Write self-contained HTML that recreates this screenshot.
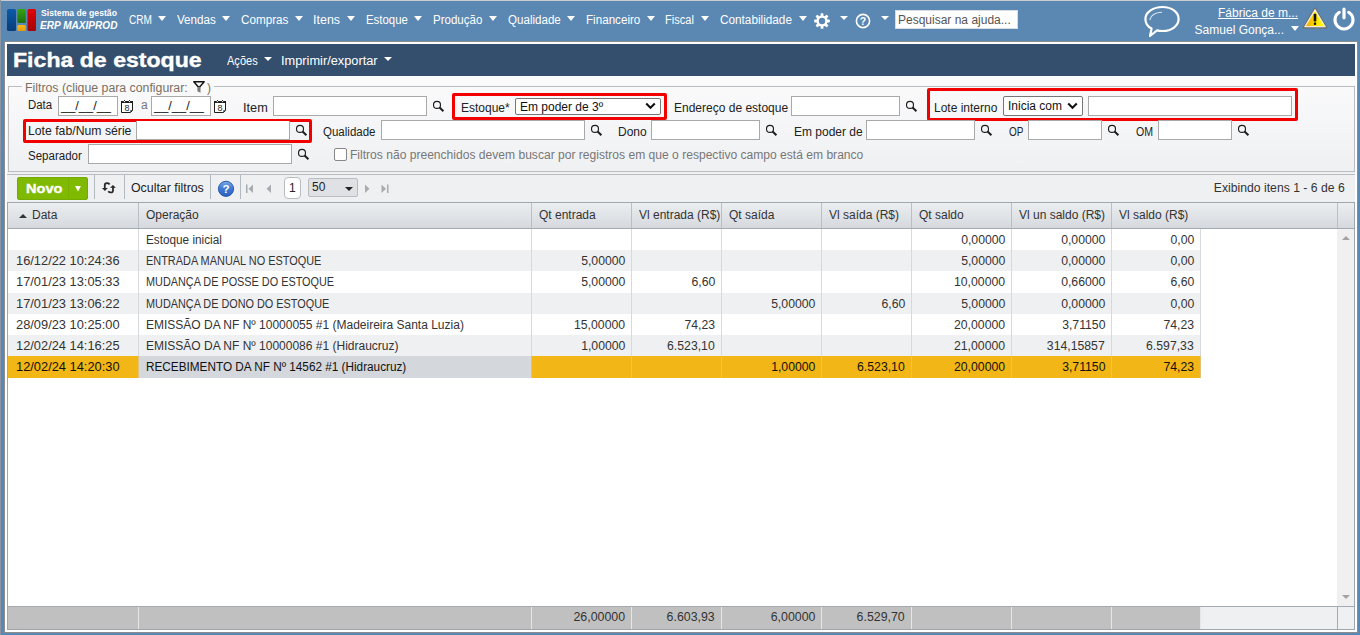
<!DOCTYPE html>
<html><head><meta charset="utf-8"><title>Ficha de estoque</title>
<style>
html,body{margin:0;padding:0;width:1360px;height:635px;overflow:hidden;font-family:"Liberation Sans", sans-serif;}
body{position:relative;}
</style></head><body>
<div style="position:absolute;left:0px;top:0px;width:1360px;height:635px;background:#5b87b3;"></div>
<div style="position:absolute;left:0px;top:0px;width:1360px;height:1px;background:#c9cdd2;"></div>
<div style="position:absolute;left:0px;top:0px;width:1px;height:635px;background:#8a96a3;"></div>
<svg style="position:absolute;left:6px;top:8px" width="32" height="25">
<defs>
<linearGradient id="lb" x1="0" y1="0" x2="0" y2="1"><stop offset="0" stop-color="#0d5aa8"/><stop offset="1" stop-color="#073d7a"/></linearGradient>
<linearGradient id="lg" x1="0" y1="0" x2="0" y2="1"><stop offset="0" stop-color="#36a214"/><stop offset="1" stop-color="#1c700c"/></linearGradient>
<linearGradient id="ly" x1="0" y1="0" x2="0" y2="1"><stop offset="0" stop-color="#f6b81a"/><stop offset="1" stop-color="#e69a0a"/></linearGradient>
<linearGradient id="lr" x1="0" y1="0" x2="0" y2="1"><stop offset="0" stop-color="#e00404"/><stop offset="1" stop-color="#a30404"/></linearGradient>
</defs>
<rect x="1" y="1" width="9" height="22" rx="1.5" fill="url(#lb)"/>
<rect x="11.3" y="1" width="8.5" height="14" rx="1.5" fill="url(#lg)"/>
<rect x="11.3" y="17" width="8.5" height="6" rx="1.5" fill="url(#ly)"/>
<rect x="21.5" y="1" width="8.5" height="22" rx="1.5" fill="url(#lr)"/>
</svg>
<div style="position:absolute;left:41px;top:8.00px;font-size:9.5px;line-height:9.5px;color:#fff;font-weight:bold;white-space:nowrap;transform:scaleX(0.91);transform-origin:left top;">Sistema de gestão</div>
<div style="position:absolute;left:40px;top:20.00px;font-size:10.5px;line-height:10.5px;color:#fff;font-weight:bold;white-space:nowrap;transform:scaleX(0.96);transform-origin:left top;font-style:italic;">ERP MAXIPROD</div>
<div style="position:absolute;left:129px;top:14.00px;font-size:12px;line-height:12px;color:#fff;font-weight:normal;white-space:nowrap;transform:scaleX(0.84);transform-origin:left top;">CRM</div>
<svg style="position:absolute;left:158px;top:16px" width="8" height="5"><polygon points="0,0 8,0 4.0,5" fill="#fff"/></svg>
<div style="position:absolute;left:177px;top:14.00px;font-size:12px;line-height:12px;color:#fff;font-weight:normal;white-space:nowrap;transform:scaleX(0.97);transform-origin:left top;">Vendas</div>
<svg style="position:absolute;left:222px;top:16px" width="8" height="5"><polygon points="0,0 8,0 4.0,5" fill="#fff"/></svg>
<div style="position:absolute;left:241px;top:14.00px;font-size:12px;line-height:12px;color:#fff;font-weight:normal;white-space:nowrap;transform:scaleX(0.975);transform-origin:left top;">Compras</div>
<svg style="position:absolute;left:295px;top:16px" width="8" height="5"><polygon points="0,0 8,0 4.0,5" fill="#fff"/></svg>
<div style="position:absolute;left:313px;top:14.00px;font-size:12px;line-height:12px;color:#fff;font-weight:normal;white-space:nowrap;transform:scaleX(1.04);transform-origin:left top;">Itens</div>
<svg style="position:absolute;left:347px;top:16px" width="8" height="5"><polygon points="0,0 8,0 4.0,5" fill="#fff"/></svg>
<div style="position:absolute;left:366px;top:14.00px;font-size:12px;line-height:12px;color:#fff;font-weight:normal;white-space:nowrap;transform:scaleX(0.95);transform-origin:left top;">Estoque</div>
<svg style="position:absolute;left:414px;top:16px" width="8" height="5"><polygon points="0,0 8,0 4.0,5" fill="#fff"/></svg>
<div style="position:absolute;left:433px;top:14.00px;font-size:12px;line-height:12px;color:#fff;font-weight:normal;white-space:nowrap;transform:scaleX(0.96);transform-origin:left top;">Produção</div>
<svg style="position:absolute;left:489px;top:16px" width="8" height="5"><polygon points="0,0 8,0 4.0,5" fill="#fff"/></svg>
<div style="position:absolute;left:508px;top:14.00px;font-size:12px;line-height:12px;color:#fff;font-weight:normal;white-space:nowrap;transform:scaleX(0.965);transform-origin:left top;">Qualidade</div>
<svg style="position:absolute;left:567px;top:16px" width="8" height="5"><polygon points="0,0 8,0 4.0,5" fill="#fff"/></svg>
<div style="position:absolute;left:586px;top:14.00px;font-size:12px;line-height:12px;color:#fff;font-weight:normal;white-space:nowrap;transform:scaleX(0.97);transform-origin:left top;">Financeiro</div>
<svg style="position:absolute;left:647px;top:16px" width="8" height="5"><polygon points="0,0 8,0 4.0,5" fill="#fff"/></svg>
<div style="position:absolute;left:665px;top:14.00px;font-size:12px;line-height:12px;color:#fff;font-weight:normal;white-space:nowrap;transform:scaleX(0.92);transform-origin:left top;">Fiscal</div>
<svg style="position:absolute;left:701px;top:16px" width="8" height="5"><polygon points="0,0 8,0 4.0,5" fill="#fff"/></svg>
<div style="position:absolute;left:720px;top:14.00px;font-size:12px;line-height:12px;color:#fff;font-weight:normal;white-space:nowrap;transform:scaleX(0.98);transform-origin:left top;">Contabilidade</div>
<svg style="position:absolute;left:799px;top:16px" width="8" height="5"><polygon points="0,0 8,0 4.0,5" fill="#fff"/></svg>
<svg style="position:absolute;left:813px;top:12px" width="18" height="18" viewBox="0 0 18 18">
<g fill="#fff" transform="translate(9,9)">
<rect x="-1.4" y="-7.8" width="2.8" height="15.6" rx="0.6"/>
<rect x="-1.4" y="-7.8" width="2.8" height="15.6" rx="0.6" transform="rotate(45)"/>
<rect x="-1.4" y="-7.8" width="2.8" height="15.6" rx="0.6" transform="rotate(90)"/>
<rect x="-1.4" y="-7.8" width="2.8" height="15.6" rx="0.6" transform="rotate(135)"/>
<circle r="5.6"/>
</g>
<circle cx="9" cy="9" r="3.2" fill="#5b87b3"/>
</svg>
<svg style="position:absolute;left:840px;top:16px" width="8" height="4"><polygon points="0,0 8,0 4.0,4" fill="#fff"/></svg>
<svg style="position:absolute;left:855px;top:13px" width="16" height="16" viewBox="0 0 16 16">
<circle cx="8" cy="8" r="6.6" fill="none" stroke="#fff" stroke-width="1.6"/>
<text x="8" y="12.2" font-family="Liberation Sans" font-weight="bold" font-size="10.5" fill="#fff" text-anchor="middle">?</text>
</svg>
<svg style="position:absolute;left:881px;top:16px" width="8" height="4"><polygon points="0,0 8,0 4.0,4" fill="#fff"/></svg>
<div style="position:absolute;left:895px;top:10px;width:123px;height:19px;background:#fff;border:1px solid #d8dde3;box-sizing:border-box;"></div>
<div style="position:absolute;left:898px;top:14.00px;font-size:12px;line-height:12px;color:#555;font-weight:normal;white-space:nowrap;">Pesquisar na ajuda...</div>
<svg style="position:absolute;left:1142px;top:4px" width="40" height="35" viewBox="0 0 40 35">
<path d="M20.5 3 C29.6 3 36.6 8.2 36.6 15 C36.6 21.8 29.6 27 20.5 27 C18.5 27 16.7 26.8 15 26.4 L8 32 L9.6 24.6 C5.5 22.5 3.4 19 3.4 15 C3.4 8.2 11.4 3 20.5 3 Z" fill="none" stroke="#fff" stroke-width="2.2" stroke-linejoin="round"/>
<path d="M8 15.5 C9 11.5 13.5 8.6 19.5 8.3" fill="none" stroke="#fff" stroke-width="1.1" stroke-linecap="round" opacity="0.85"/>
</svg>
<div style="position:absolute;right:62px;top:7.00px;font-size:12px;line-height:12px;color:#fff;font-weight:normal;white-space:nowrap;text-decoration:underline;">Fábrica de m...</div>
<div style="position:absolute;right:76px;top:24.00px;font-size:12px;line-height:12px;color:#fff;font-weight:normal;white-space:nowrap;">Samuel Gonça...</div>
<svg style="position:absolute;left:1291px;top:26px" width="8" height="5"><polygon points="0,0 8,0 4.0,5" fill="#fff"/></svg>
<svg style="position:absolute;left:1302px;top:7px" width="26" height="23" viewBox="0 0 26 23">
<defs><linearGradient id="wy" x1="0" y1="0" x2="1" y2="0"><stop offset="0" stop-color="#f2a800"/><stop offset="0.6" stop-color="#ffe600"/><stop offset="1" stop-color="#ffff10"/></linearGradient></defs>
<path d="M13 1.2 L24.6 20.6 L1.4 20.6 Z" fill="#6e6e6e" stroke="#6e6e6e" stroke-width="1.6" stroke-linejoin="round"/>
<path d="M13 2.4 L23.4 19.8 L2.6 19.8 Z" fill="#fffbe0" stroke="#fffbe0" stroke-width="0.8" stroke-linejoin="round"/>
<path d="M13 4.2 L22 18.9 L4 18.9 Z" fill="url(#wy)"/>
<rect x="11.7" y="6.8" width="2.6" height="7.6" fill="#111"/>
<rect x="11.9" y="15.5" width="2.2" height="2.4" fill="#111"/>
</svg>
<svg style="position:absolute;left:1331px;top:6px" width="26" height="26" viewBox="0 0 26 26">
<path d="M8.3 6.3 A9 9 0 1 0 17.7 6.3" fill="none" stroke="#fff" stroke-width="3.1" stroke-linecap="round"/>
<line x1="13" y1="3" x2="13" y2="11.8" stroke="#fff" stroke-width="3.2" stroke-linecap="round"/>
</svg>
<div style="position:absolute;left:4px;top:41px;width:1354px;height:592px;background:#fff;border:1px solid #8c8c8c;box-sizing:border-box;"></div>
<div style="position:absolute;left:7px;top:44px;width:1348px;height:32px;background:#344f6d;"></div>
<div style="position:absolute;left:13px;top:49.00px;font-size:21px;line-height:21px;color:#fff;font-weight:bold;white-space:nowrap;transform:scaleX(1.1);transform-origin:left top;-webkit-text-stroke:0.4px #fff;">Ficha de estoque</div>
<div style="position:absolute;left:227px;top:55.00px;font-size:12px;line-height:12px;color:#fff;font-weight:normal;white-space:nowrap;transform:scaleX(0.92);transform-origin:left top;">Ações</div>
<svg style="position:absolute;left:264px;top:57px" width="8" height="4"><polygon points="0,0 8,0 4.0,4" fill="#fff"/></svg>
<div style="position:absolute;left:281px;top:55.00px;font-size:12px;line-height:12px;color:#fff;font-weight:normal;white-space:nowrap;transform:scaleX(1.065);transform-origin:left top;">Imprimir/exportar</div>
<svg style="position:absolute;left:384px;top:57px" width="8" height="4"><polygon points="0,0 8,0 4.0,4" fill="#fff"/></svg>
<div style="position:absolute;left:7px;top:76px;width:1348px;height:98px;background:linear-gradient(#fbfbfc,#eff0f2);"></div>
<div style="position:absolute;left:8px;top:86px;width:1347px;height:86px;border:1px solid #b9bdc2;box-sizing:border-box;"></div>
<div style="position:absolute;left:22px;top:80px;width:192px;height:12px;background:#f9f9fa;"></div>
<div style="position:absolute;left:25px;top:82.00px;font-size:12px;line-height:12px;color:#7b6f61;font-weight:normal;white-space:nowrap;transform:scaleX(1.025);transform-origin:left top;">Filtros (clique para configurar:</div>
<svg style="position:absolute;left:192px;top:80px" width="14" height="14" viewBox="0 0 14 14">
<path d="M1.8 1.7 H12.2 L7.6 7 H6.4 Z" fill="none" stroke="#111" stroke-width="1.4" stroke-linejoin="round"/>
<path d="M5.4 7 H8.5 V12.8 L5.4 11.2 Z" fill="#777"/>
</svg>
<div style="position:absolute;left:207px;top:82.00px;font-size:12px;line-height:12px;color:#7b6f61;font-weight:normal;white-space:nowrap;">)</div>
<div style="position:absolute;left:28px;top:99.00px;font-size:12px;line-height:12px;color:#222;font-weight:normal;white-space:nowrap;transform:scaleX(0.95);transform-origin:left top;">Data</div>
<div style="position:absolute;left:58px;top:96px;width:60px;height:20px;background:#fff;border:1px solid #a9a9a9;box-sizing:border-box;"></div>
<div style="position:absolute;left:61px;top:100.00px;font-size:12px;line-height:12px;color:#222;font-weight:normal;white-space:nowrap;transform:scaleX(1.07);transform-origin:left top;">__/__/__</div>
<svg style="position:absolute;left:121px;top:100px" width="13" height="14" viewBox="0 0 13 14">
<path d="M0.5 1.5 H11.5 V10.5 L9.5 12.5 H0.5 Z" fill="#fff" stroke="#1e1e1e" stroke-width="1"/>
<rect x="0" y="1" width="12" height="2" fill="#1e1e1e"/>
<circle cx="3.4" cy="1.6" r="0.7" fill="#fff"/><circle cx="8.5" cy="1.6" r="0.7" fill="#fff"/>
<rect x="3" y="0" width="0.9" height="1" fill="#1e1e1e"/><rect x="8.1" y="0" width="0.9" height="1" fill="#1e1e1e"/>
<path d="M9.3 12.6 L11.6 10.3 L9.3 10.3 Z" fill="#1e1e1e"/>
<text x="6" y="10.6" font-family="Liberation Sans" font-size="9" fill="#1e1e1e" text-anchor="middle">8</text>
</svg>
<div style="position:absolute;left:141px;top:99.00px;font-size:12px;line-height:12px;color:#777;font-weight:normal;white-space:nowrap;">a</div>
<div style="position:absolute;left:151px;top:96px;width:60px;height:20px;background:#fff;border:1px solid #a9a9a9;box-sizing:border-box;"></div>
<div style="position:absolute;left:154px;top:100.00px;font-size:12px;line-height:12px;color:#222;font-weight:normal;white-space:nowrap;transform:scaleX(1.07);transform-origin:left top;">__/__/__</div>
<svg style="position:absolute;left:214px;top:100px" width="13" height="14" viewBox="0 0 13 14">
<path d="M0.5 1.5 H11.5 V10.5 L9.5 12.5 H0.5 Z" fill="#fff" stroke="#1e1e1e" stroke-width="1"/>
<rect x="0" y="1" width="12" height="2" fill="#1e1e1e"/>
<circle cx="3.4" cy="1.6" r="0.7" fill="#fff"/><circle cx="8.5" cy="1.6" r="0.7" fill="#fff"/>
<rect x="3" y="0" width="0.9" height="1" fill="#1e1e1e"/><rect x="8.1" y="0" width="0.9" height="1" fill="#1e1e1e"/>
<path d="M9.3 12.6 L11.6 10.3 L9.3 10.3 Z" fill="#1e1e1e"/>
<text x="6" y="10.6" font-family="Liberation Sans" font-size="9" fill="#1e1e1e" text-anchor="middle">8</text>
</svg>
<div style="position:absolute;left:243px;top:102.00px;font-size:12px;line-height:12px;color:#222;font-weight:normal;white-space:nowrap;transform:scaleX(1.06);transform-origin:left top;">Item</div>
<div style="position:absolute;left:273px;top:96px;width:154px;height:20px;background:#fff;border:1px solid #a9a9a9;box-sizing:border-box;"></div>
<svg style="position:absolute;left:432px;top:100px" width="13" height="13" viewBox="0 0 13 13">
<circle cx="5" cy="4.9" r="3.5" fill="none" stroke="#1e1e1e" stroke-width="1.15"/>
<line x1="7.6" y1="7.5" x2="11.4" y2="11.3" stroke="#1e1e1e" stroke-width="2"/>
</svg>
<div style="position:absolute;left:452px;top:93px;width:215px;height:27px;border:3px solid #f20000;border-radius:2px;box-sizing:border-box;"></div>
<div style="position:absolute;left:461px;top:102.00px;font-size:12px;line-height:12px;color:#222;font-weight:normal;white-space:nowrap;">Estoque*</div>
<div style="position:absolute;left:515px;top:98px;width:146px;height:17px;background:#fff;border:1px solid #767676;border-radius:2px;box-sizing:border-box;"></div>
<div style="position:absolute;left:520px;top:101.00px;font-size:12px;line-height:12px;color:#111;font-weight:normal;white-space:nowrap;">Em poder de 3º</div>
<svg style="position:absolute;left:645px;top:102px" width="11" height="8" viewBox="0 0 11 8"><path d="M1.2 1.5 L5.5 5.8 L9.8 1.5" fill="none" stroke="#111" stroke-width="2"/></svg>
<div style="position:absolute;left:674px;top:102.00px;font-size:12px;line-height:12px;color:#222;font-weight:normal;white-space:nowrap;">Endereço de estoque</div>
<div style="position:absolute;left:791px;top:96px;width:109px;height:20px;background:#fff;border:1px solid #a9a9a9;box-sizing:border-box;"></div>
<svg style="position:absolute;left:905px;top:100px" width="13" height="13" viewBox="0 0 13 13">
<circle cx="5" cy="4.9" r="3.5" fill="none" stroke="#1e1e1e" stroke-width="1.15"/>
<line x1="7.6" y1="7.5" x2="11.4" y2="11.3" stroke="#1e1e1e" stroke-width="2"/>
</svg>
<div style="position:absolute;left:927px;top:88px;width:371px;height:33px;border:3px solid #f20000;border-radius:2px;box-sizing:border-box;"></div>
<div style="position:absolute;left:934px;top:102.00px;font-size:12px;line-height:12px;color:#222;font-weight:normal;white-space:nowrap;">Lote interno</div>
<div style="position:absolute;left:1003px;top:96px;width:80px;height:20px;background:#fff;border:1px solid #767676;border-radius:2px;box-sizing:border-box;"></div>
<div style="position:absolute;left:1008px;top:100.00px;font-size:12px;line-height:12px;color:#111;font-weight:normal;white-space:nowrap;">Inicia com</div>
<svg style="position:absolute;left:1067px;top:102px" width="11" height="8" viewBox="0 0 11 8"><path d="M1.2 1.5 L5.5 5.8 L9.8 1.5" fill="none" stroke="#111" stroke-width="2"/></svg>
<div style="position:absolute;left:1088px;top:96px;width:204px;height:20px;background:#fff;border:1px solid #a9a9a9;box-sizing:border-box;"></div>
<div style="position:absolute;left:23px;top:119px;width:289px;height:24px;border:3px solid #f20000;border-radius:2px;box-sizing:border-box;"></div>
<div style="position:absolute;left:28px;top:125.00px;font-size:12px;line-height:12px;color:#222;font-weight:normal;white-space:nowrap;transform:scaleX(1.02);transform-origin:left top;">Lote fab/Num série</div>
<div style="position:absolute;left:136px;top:121px;width:154px;height:19px;background:#fff;border:1px solid #a9a9a9;box-sizing:border-box;border-top:none;"></div>
<svg style="position:absolute;left:295px;top:124px" width="13" height="13" viewBox="0 0 13 13">
<circle cx="5" cy="4.9" r="3.5" fill="none" stroke="#1e1e1e" stroke-width="1.15"/>
<line x1="7.6" y1="7.5" x2="11.4" y2="11.3" stroke="#1e1e1e" stroke-width="2"/>
</svg>
<div style="position:absolute;left:323px;top:126.00px;font-size:12px;line-height:12px;color:#222;font-weight:normal;white-space:nowrap;transform:scaleX(0.96);transform-origin:left top;">Qualidade</div>
<div style="position:absolute;left:381px;top:120px;width:204px;height:20px;background:#fff;border:1px solid #a9a9a9;box-sizing:border-box;"></div>
<svg style="position:absolute;left:590px;top:124px" width="13" height="13" viewBox="0 0 13 13">
<circle cx="5" cy="4.9" r="3.5" fill="none" stroke="#1e1e1e" stroke-width="1.15"/>
<line x1="7.6" y1="7.5" x2="11.4" y2="11.3" stroke="#1e1e1e" stroke-width="2"/>
</svg>
<div style="position:absolute;left:618px;top:126.00px;font-size:12px;line-height:12px;color:#222;font-weight:normal;white-space:nowrap;">Dono</div>
<div style="position:absolute;left:651px;top:120px;width:109px;height:20px;background:#fff;border:1px solid #a9a9a9;box-sizing:border-box;"></div>
<svg style="position:absolute;left:765px;top:124px" width="13" height="13" viewBox="0 0 13 13">
<circle cx="5" cy="4.9" r="3.5" fill="none" stroke="#1e1e1e" stroke-width="1.15"/>
<line x1="7.6" y1="7.5" x2="11.4" y2="11.3" stroke="#1e1e1e" stroke-width="2"/>
</svg>
<div style="position:absolute;left:794px;top:126.00px;font-size:12px;line-height:12px;color:#222;font-weight:normal;white-space:nowrap;">Em poder de</div>
<div style="position:absolute;left:866px;top:120px;width:109px;height:20px;background:#fff;border:1px solid #a9a9a9;box-sizing:border-box;"></div>
<svg style="position:absolute;left:980px;top:124px" width="13" height="13" viewBox="0 0 13 13">
<circle cx="5" cy="4.9" r="3.5" fill="none" stroke="#1e1e1e" stroke-width="1.15"/>
<line x1="7.6" y1="7.5" x2="11.4" y2="11.3" stroke="#1e1e1e" stroke-width="2"/>
</svg>
<div style="position:absolute;left:1009px;top:126.00px;font-size:12px;line-height:12px;color:#222;font-weight:normal;white-space:nowrap;transform:scaleX(0.83);transform-origin:left top;">OP</div>
<div style="position:absolute;left:1028px;top:120px;width:74px;height:20px;background:#fff;border:1px solid #a9a9a9;box-sizing:border-box;"></div>
<svg style="position:absolute;left:1107px;top:124px" width="13" height="13" viewBox="0 0 13 13">
<circle cx="5" cy="4.9" r="3.5" fill="none" stroke="#1e1e1e" stroke-width="1.15"/>
<line x1="7.6" y1="7.5" x2="11.4" y2="11.3" stroke="#1e1e1e" stroke-width="2"/>
</svg>
<div style="position:absolute;left:1136px;top:126.00px;font-size:12px;line-height:12px;color:#222;font-weight:normal;white-space:nowrap;transform:scaleX(0.88);transform-origin:left top;">OM</div>
<div style="position:absolute;left:1158px;top:120px;width:74px;height:20px;background:#fff;border:1px solid #a9a9a9;box-sizing:border-box;"></div>
<svg style="position:absolute;left:1237px;top:124px" width="13" height="13" viewBox="0 0 13 13">
<circle cx="5" cy="4.9" r="3.5" fill="none" stroke="#1e1e1e" stroke-width="1.15"/>
<line x1="7.6" y1="7.5" x2="11.4" y2="11.3" stroke="#1e1e1e" stroke-width="2"/>
</svg>
<div style="position:absolute;left:28px;top:150.00px;font-size:12px;line-height:12px;color:#222;font-weight:normal;white-space:nowrap;transform:scaleX(0.96);transform-origin:left top;">Separador</div>
<div style="position:absolute;left:88px;top:144px;width:204px;height:20px;background:#fff;border:1px solid #a9a9a9;box-sizing:border-box;"></div>
<svg style="position:absolute;left:297px;top:148px" width="13" height="13" viewBox="0 0 13 13">
<circle cx="5" cy="4.9" r="3.5" fill="none" stroke="#1e1e1e" stroke-width="1.15"/>
<line x1="7.6" y1="7.5" x2="11.4" y2="11.3" stroke="#1e1e1e" stroke-width="2"/>
</svg>
<div style="position:absolute;left:334px;top:148px;width:13px;height:13px;background:#fff;border:1px solid #888;border-radius:2px;box-sizing:border-box;"></div>
<div style="position:absolute;left:350px;top:149.00px;font-size:12px;line-height:12px;color:#777;font-weight:normal;white-space:nowrap;transform:scaleX(1.006);transform-origin:left top;">Filtros não preenchidos devem buscar por registros em que o respectivo campo está em branco</div>
<div style="position:absolute;left:7px;top:174px;width:1348px;height:29px;background:#eff0f2;border-top:1px solid #b9bdc2;box-sizing:border-box;"></div>
<div style="position:absolute;left:17px;top:177px;width:71px;height:23px;background:#7fba00;border-radius:3px;box-shadow:inset 0 0 0 1px #74ab00;"></div>
<div style="position:absolute;left:68px;top:177px;width:1px;height:23px;background:#77b000;"></div>
<div style="position:absolute;left:26px;top:182.00px;font-size:13px;line-height:13px;color:#fff;font-weight:bold;white-space:nowrap;transform:scaleX(1.12);transform-origin:left top;-webkit-text-stroke:0.35px #fff;">Novo</div>
<svg style="position:absolute;left:75px;top:186px" width="6" height="5.5"><polygon points="0,0 6,0 3.0,5.5" fill="#fff"/></svg>
<div style="position:absolute;left:94px;top:175px;width:1px;height:24px;background:#b3b9c0;"></div>
<svg style="position:absolute;left:100px;top:181px" width="17" height="13" viewBox="0 0 17 13">
<path d="M9.6 3.4 C8.8 2.2 6.6 1.8 5.2 2.6 C4.8 2.9 4.8 3.3 4.8 4 V7.5" fill="none" stroke="#2a2a2a" stroke-width="1.8"/>
<path d="M2 7 H7.8 L4.9 9.9 Z" fill="#2a2a2a"/>
<path d="M8.3 10.3 C9 11.4 11.4 11.8 12.5 11 C13 10.6 13 10.2 13 9.5 V6" fill="none" stroke="#2a2a2a" stroke-width="1.8"/>
<path d="M10 6.7 H15.9 L12.95 3.9 Z" fill="#2a2a2a"/>
</svg>
<div style="position:absolute;left:124px;top:175px;width:1px;height:24px;background:#b3b9c0;"></div>
<div style="position:absolute;left:131px;top:182.00px;font-size:12px;line-height:12px;color:#222;font-weight:normal;white-space:nowrap;transform:scaleX(1.03);transform-origin:left top;">Ocultar filtros</div>
<div style="position:absolute;left:210px;top:175px;width:1px;height:24px;background:#b3b9c0;"></div>
<svg style="position:absolute;left:217px;top:180px" width="18" height="18" viewBox="0 0 18 18">
<defs><linearGradient id="hg" x1="0" y1="0" x2="0" y2="1"><stop offset="0" stop-color="#79a9e6"/><stop offset="0.5" stop-color="#3f7ad2"/><stop offset="1" stop-color="#2c62c0"/></linearGradient></defs>
<circle cx="9" cy="8.8" r="7.6" fill="url(#hg)" stroke="#2050a8" stroke-width="0.9"/>
<text x="9" y="13.2" font-family="Liberation Sans" font-weight="bold" font-size="11.5" fill="#fff" text-anchor="middle">?</text>
</svg>
<div style="position:absolute;left:240px;top:175px;width:1px;height:24px;background:#b3b9c0;"></div>
<svg style="position:absolute;left:246px;top:184px" width="8" height="10" viewBox="0 0 8 10"><rect x="0" y="0.5" width="1.5" height="8.5" fill="#a8abb0"/><path d="M7 0.5 V9 L2.5 4.75 Z" fill="#a8abb0"/></svg>
<svg style="position:absolute;left:265px;top:184px" width="7" height="10" viewBox="0 0 7 10"><path d="M6 0.5 V9 L1.5 4.75 Z" fill="#a8abb0"/></svg>
<div style="position:absolute;left:284px;top:177px;width:17px;height:22px;background:#fff;border:1px solid #b8bbbf;border-radius:4px;box-sizing:border-box;"></div>
<div style="position:absolute;left:289px;top:182.00px;font-size:12px;line-height:12px;color:#222;font-weight:normal;white-space:nowrap;">1</div>
<div style="position:absolute;left:308px;top:178px;width:50px;height:19px;background:#dfe1e4;border:1px solid #b9bcc0;border-radius:2px;box-sizing:border-box;"></div>
<div style="position:absolute;left:312px;top:181.00px;font-size:12px;line-height:12px;color:#222;font-weight:normal;white-space:nowrap;">50</div>
<svg style="position:absolute;left:345px;top:187px" width="8" height="4"><polygon points="0,0 8,0 4.0,4" fill="#222"/></svg>
<svg style="position:absolute;left:364px;top:184px" width="7" height="10" viewBox="0 0 7 10"><path d="M1 0.5 V9 L5.5 4.75 Z" fill="#a8abb0"/></svg>
<svg style="position:absolute;left:381px;top:184px" width="8" height="10" viewBox="0 0 8 10"><path d="M0.5 0.5 V9 L5 4.75 Z" fill="#a8abb0"/><rect x="6" y="0.5" width="1.5" height="8.5" fill="#a8abb0"/></svg>
<div style="position:absolute;right:15px;top:182.00px;font-size:12px;line-height:12px;color:#333;font-weight:normal;white-space:nowrap;transform:scaleX(1.017);transform-origin:right top;">Exibindo itens 1 - 6 de 6</div>
<div style="position:absolute;left:7px;top:202px;width:1348px;height:428px;background:#fff;border:1px solid #9ea6ae;box-sizing:border-box;"></div>
<div style="position:absolute;left:8px;top:203px;width:1346px;height:25px;background:linear-gradient(#eceef0,#d5d9de);border-bottom:1px solid #a3aab2;"></div>
<div style="position:absolute;left:138px;top:203px;width:1px;height:25px;background:#b9bfc6;"></div>
<div style="position:absolute;left:531px;top:203px;width:1px;height:25px;background:#b9bfc6;"></div>
<div style="position:absolute;left:631px;top:203px;width:1px;height:25px;background:#b9bfc6;"></div>
<div style="position:absolute;left:721px;top:203px;width:1px;height:25px;background:#b9bfc6;"></div>
<div style="position:absolute;left:821px;top:203px;width:1px;height:25px;background:#b9bfc6;"></div>
<div style="position:absolute;left:911px;top:203px;width:1px;height:25px;background:#b9bfc6;"></div>
<div style="position:absolute;left:1011px;top:203px;width:1px;height:25px;background:#b9bfc6;"></div>
<div style="position:absolute;left:1111px;top:203px;width:1px;height:25px;background:#b9bfc6;"></div>
<div style="position:absolute;left:1337px;top:203px;width:1px;height:25px;background:#b9bfc6;"></div>
<svg style="position:absolute;left:19px;top:214px" width="8" height="4"><polygon points="0,4 8,4 4.0,0" fill="#333"/></svg>
<div style="position:absolute;left:32px;top:209.00px;font-size:12px;line-height:12px;color:#333;font-weight:normal;white-space:nowrap;">Data</div>
<div style="position:absolute;left:146px;top:209.00px;font-size:12px;line-height:12px;color:#333;font-weight:normal;white-space:nowrap;">Operação</div>
<div style="position:absolute;left:539px;top:209.00px;font-size:12px;line-height:12px;color:#333;font-weight:normal;white-space:nowrap;">Qt entrada</div>
<div style="position:absolute;left:639px;top:209.00px;font-size:12px;line-height:12px;color:#333;font-weight:normal;white-space:nowrap;">Vl entrada (R$)</div>
<div style="position:absolute;left:729px;top:209.00px;font-size:12px;line-height:12px;color:#333;font-weight:normal;white-space:nowrap;">Qt saída</div>
<div style="position:absolute;left:829px;top:209.00px;font-size:12px;line-height:12px;color:#333;font-weight:normal;white-space:nowrap;">Vl saída (R$)</div>
<div style="position:absolute;left:919px;top:209.00px;font-size:12px;line-height:12px;color:#333;font-weight:normal;white-space:nowrap;">Qt saldo</div>
<div style="position:absolute;left:1019px;top:209.00px;font-size:12px;line-height:12px;color:#333;font-weight:normal;white-space:nowrap;">Vl un saldo (R$)</div>
<div style="position:absolute;left:1119px;top:209.00px;font-size:12px;line-height:12px;color:#333;font-weight:normal;white-space:nowrap;">Vl saldo (R$)</div>
<div style="position:absolute;left:8px;top:229px;width:1192px;height:21px;background:#fff;"></div>
<div style="position:absolute;left:138px;top:229px;width:1px;height:21px;background:#d6d9dd;"></div>
<div style="position:absolute;left:531px;top:229px;width:1px;height:21px;background:#d6d9dd;"></div>
<div style="position:absolute;left:631px;top:229px;width:1px;height:21px;background:#d6d9dd;"></div>
<div style="position:absolute;left:721px;top:229px;width:1px;height:21px;background:#d6d9dd;"></div>
<div style="position:absolute;left:821px;top:229px;width:1px;height:21px;background:#d6d9dd;"></div>
<div style="position:absolute;left:911px;top:229px;width:1px;height:21px;background:#d6d9dd;"></div>
<div style="position:absolute;left:1011px;top:229px;width:1px;height:21px;background:#d6d9dd;"></div>
<div style="position:absolute;left:1111px;top:229px;width:1px;height:21px;background:#d6d9dd;"></div>
<div style="position:absolute;left:1200px;top:229px;width:1px;height:21px;background:#d6d9dd;"></div>
<div style="position:absolute;left:16px;top:234.00px;font-size:12px;line-height:12px;color:#333;font-weight:normal;white-space:nowrap;transform:scaleX(1.07);transform-origin:left top;"></div>
<div style="position:absolute;left:146px;top:234.00px;font-size:12px;line-height:12px;color:#333;font-weight:normal;white-space:nowrap;transform:scaleX(0.98);transform-origin:left top;">Estoque inicial</div>
<div style="position:absolute;right:355px;top:234.00px;font-size:12px;line-height:12px;color:#333;font-weight:normal;white-space:nowrap;transform:scaleX(1.02);transform-origin:right top;">0,00000</div>
<div style="position:absolute;right:255px;top:234.00px;font-size:12px;line-height:12px;color:#333;font-weight:normal;white-space:nowrap;transform:scaleX(1.02);transform-origin:right top;">0,00000</div>
<div style="position:absolute;right:166px;top:234.00px;font-size:12px;line-height:12px;color:#333;font-weight:normal;white-space:nowrap;transform:scaleX(1.02);transform-origin:right top;">0,00</div>
<div style="position:absolute;left:8px;top:250px;width:1192px;height:21px;background:#eff0f2;"></div>
<div style="position:absolute;left:138px;top:250px;width:1px;height:21px;background:#d6d9dd;"></div>
<div style="position:absolute;left:531px;top:250px;width:1px;height:21px;background:#d6d9dd;"></div>
<div style="position:absolute;left:631px;top:250px;width:1px;height:21px;background:#d6d9dd;"></div>
<div style="position:absolute;left:721px;top:250px;width:1px;height:21px;background:#d6d9dd;"></div>
<div style="position:absolute;left:821px;top:250px;width:1px;height:21px;background:#d6d9dd;"></div>
<div style="position:absolute;left:911px;top:250px;width:1px;height:21px;background:#d6d9dd;"></div>
<div style="position:absolute;left:1011px;top:250px;width:1px;height:21px;background:#d6d9dd;"></div>
<div style="position:absolute;left:1111px;top:250px;width:1px;height:21px;background:#d6d9dd;"></div>
<div style="position:absolute;left:1200px;top:250px;width:1px;height:21px;background:#d6d9dd;"></div>
<div style="position:absolute;left:16px;top:255.00px;font-size:12px;line-height:12px;color:#333;font-weight:normal;white-space:nowrap;transform:scaleX(1.07);transform-origin:left top;">16/12/22 10:24:36</div>
<div style="position:absolute;left:146px;top:255.00px;font-size:12px;line-height:12px;color:#333;font-weight:normal;white-space:nowrap;transform:scaleX(0.91);transform-origin:left top;">ENTRADA MANUAL NO ESTOQUE</div>
<div style="position:absolute;right:735px;top:255.00px;font-size:12px;line-height:12px;color:#333;font-weight:normal;white-space:nowrap;transform:scaleX(1.02);transform-origin:right top;">5,00000</div>
<div style="position:absolute;right:355px;top:255.00px;font-size:12px;line-height:12px;color:#333;font-weight:normal;white-space:nowrap;transform:scaleX(1.02);transform-origin:right top;">5,00000</div>
<div style="position:absolute;right:255px;top:255.00px;font-size:12px;line-height:12px;color:#333;font-weight:normal;white-space:nowrap;transform:scaleX(1.02);transform-origin:right top;">0,00000</div>
<div style="position:absolute;right:166px;top:255.00px;font-size:12px;line-height:12px;color:#333;font-weight:normal;white-space:nowrap;transform:scaleX(1.02);transform-origin:right top;">0,00</div>
<div style="position:absolute;left:8px;top:271px;width:1192px;height:22px;background:#fff;"></div>
<div style="position:absolute;left:138px;top:271px;width:1px;height:22px;background:#d6d9dd;"></div>
<div style="position:absolute;left:531px;top:271px;width:1px;height:22px;background:#d6d9dd;"></div>
<div style="position:absolute;left:631px;top:271px;width:1px;height:22px;background:#d6d9dd;"></div>
<div style="position:absolute;left:721px;top:271px;width:1px;height:22px;background:#d6d9dd;"></div>
<div style="position:absolute;left:821px;top:271px;width:1px;height:22px;background:#d6d9dd;"></div>
<div style="position:absolute;left:911px;top:271px;width:1px;height:22px;background:#d6d9dd;"></div>
<div style="position:absolute;left:1011px;top:271px;width:1px;height:22px;background:#d6d9dd;"></div>
<div style="position:absolute;left:1111px;top:271px;width:1px;height:22px;background:#d6d9dd;"></div>
<div style="position:absolute;left:1200px;top:271px;width:1px;height:22px;background:#d6d9dd;"></div>
<div style="position:absolute;left:16px;top:276.00px;font-size:12px;line-height:12px;color:#333;font-weight:normal;white-space:nowrap;transform:scaleX(1.07);transform-origin:left top;">17/01/23 13:05:33</div>
<div style="position:absolute;left:146px;top:276.00px;font-size:12px;line-height:12px;color:#333;font-weight:normal;white-space:nowrap;transform:scaleX(0.905);transform-origin:left top;">MUDANÇA DE POSSE DO ESTOQUE</div>
<div style="position:absolute;right:735px;top:276.00px;font-size:12px;line-height:12px;color:#333;font-weight:normal;white-space:nowrap;transform:scaleX(1.02);transform-origin:right top;">5,00000</div>
<div style="position:absolute;right:645px;top:276.00px;font-size:12px;line-height:12px;color:#333;font-weight:normal;white-space:nowrap;transform:scaleX(1.02);transform-origin:right top;">6,60</div>
<div style="position:absolute;right:355px;top:276.00px;font-size:12px;line-height:12px;color:#333;font-weight:normal;white-space:nowrap;transform:scaleX(1.02);transform-origin:right top;">10,00000</div>
<div style="position:absolute;right:255px;top:276.00px;font-size:12px;line-height:12px;color:#333;font-weight:normal;white-space:nowrap;transform:scaleX(1.02);transform-origin:right top;">0,66000</div>
<div style="position:absolute;right:166px;top:276.00px;font-size:12px;line-height:12px;color:#333;font-weight:normal;white-space:nowrap;transform:scaleX(1.02);transform-origin:right top;">6,60</div>
<div style="position:absolute;left:8px;top:293px;width:1192px;height:21px;background:#eff0f2;"></div>
<div style="position:absolute;left:138px;top:293px;width:1px;height:21px;background:#d6d9dd;"></div>
<div style="position:absolute;left:531px;top:293px;width:1px;height:21px;background:#d6d9dd;"></div>
<div style="position:absolute;left:631px;top:293px;width:1px;height:21px;background:#d6d9dd;"></div>
<div style="position:absolute;left:721px;top:293px;width:1px;height:21px;background:#d6d9dd;"></div>
<div style="position:absolute;left:821px;top:293px;width:1px;height:21px;background:#d6d9dd;"></div>
<div style="position:absolute;left:911px;top:293px;width:1px;height:21px;background:#d6d9dd;"></div>
<div style="position:absolute;left:1011px;top:293px;width:1px;height:21px;background:#d6d9dd;"></div>
<div style="position:absolute;left:1111px;top:293px;width:1px;height:21px;background:#d6d9dd;"></div>
<div style="position:absolute;left:1200px;top:293px;width:1px;height:21px;background:#d6d9dd;"></div>
<div style="position:absolute;left:16px;top:298.00px;font-size:12px;line-height:12px;color:#333;font-weight:normal;white-space:nowrap;transform:scaleX(1.07);transform-origin:left top;">17/01/23 13:06:22</div>
<div style="position:absolute;left:146px;top:298.00px;font-size:12px;line-height:12px;color:#333;font-weight:normal;white-space:nowrap;transform:scaleX(0.905);transform-origin:left top;">MUDANÇA DE DONO DO ESTOQUE</div>
<div style="position:absolute;right:545px;top:298.00px;font-size:12px;line-height:12px;color:#333;font-weight:normal;white-space:nowrap;transform:scaleX(1.02);transform-origin:right top;">5,00000</div>
<div style="position:absolute;right:455px;top:298.00px;font-size:12px;line-height:12px;color:#333;font-weight:normal;white-space:nowrap;transform:scaleX(1.02);transform-origin:right top;">6,60</div>
<div style="position:absolute;right:355px;top:298.00px;font-size:12px;line-height:12px;color:#333;font-weight:normal;white-space:nowrap;transform:scaleX(1.02);transform-origin:right top;">5,00000</div>
<div style="position:absolute;right:255px;top:298.00px;font-size:12px;line-height:12px;color:#333;font-weight:normal;white-space:nowrap;transform:scaleX(1.02);transform-origin:right top;">0,00000</div>
<div style="position:absolute;right:166px;top:298.00px;font-size:12px;line-height:12px;color:#333;font-weight:normal;white-space:nowrap;transform:scaleX(1.02);transform-origin:right top;">0,00</div>
<div style="position:absolute;left:8px;top:314px;width:1192px;height:21px;background:#fff;"></div>
<div style="position:absolute;left:138px;top:314px;width:1px;height:21px;background:#d6d9dd;"></div>
<div style="position:absolute;left:531px;top:314px;width:1px;height:21px;background:#d6d9dd;"></div>
<div style="position:absolute;left:631px;top:314px;width:1px;height:21px;background:#d6d9dd;"></div>
<div style="position:absolute;left:721px;top:314px;width:1px;height:21px;background:#d6d9dd;"></div>
<div style="position:absolute;left:821px;top:314px;width:1px;height:21px;background:#d6d9dd;"></div>
<div style="position:absolute;left:911px;top:314px;width:1px;height:21px;background:#d6d9dd;"></div>
<div style="position:absolute;left:1011px;top:314px;width:1px;height:21px;background:#d6d9dd;"></div>
<div style="position:absolute;left:1111px;top:314px;width:1px;height:21px;background:#d6d9dd;"></div>
<div style="position:absolute;left:1200px;top:314px;width:1px;height:21px;background:#d6d9dd;"></div>
<div style="position:absolute;left:16px;top:319.00px;font-size:12px;line-height:12px;color:#333;font-weight:normal;white-space:nowrap;transform:scaleX(1.07);transform-origin:left top;">28/09/23 10:25:00</div>
<div style="position:absolute;left:146px;top:319.00px;font-size:12px;line-height:12px;color:#333;font-weight:normal;white-space:nowrap;transform:scaleX(1.0);transform-origin:left top;">EMISSÃO DA NF Nº 10000055 #1 (Madeireira Santa Luzia)</div>
<div style="position:absolute;right:735px;top:319.00px;font-size:12px;line-height:12px;color:#333;font-weight:normal;white-space:nowrap;transform:scaleX(1.02);transform-origin:right top;">15,00000</div>
<div style="position:absolute;right:645px;top:319.00px;font-size:12px;line-height:12px;color:#333;font-weight:normal;white-space:nowrap;transform:scaleX(1.02);transform-origin:right top;">74,23</div>
<div style="position:absolute;right:355px;top:319.00px;font-size:12px;line-height:12px;color:#333;font-weight:normal;white-space:nowrap;transform:scaleX(1.02);transform-origin:right top;">20,00000</div>
<div style="position:absolute;right:255px;top:319.00px;font-size:12px;line-height:12px;color:#333;font-weight:normal;white-space:nowrap;transform:scaleX(1.02);transform-origin:right top;">3,71150</div>
<div style="position:absolute;right:166px;top:319.00px;font-size:12px;line-height:12px;color:#333;font-weight:normal;white-space:nowrap;transform:scaleX(1.02);transform-origin:right top;">74,23</div>
<div style="position:absolute;left:8px;top:335px;width:1192px;height:21px;background:#eff0f2;"></div>
<div style="position:absolute;left:138px;top:335px;width:1px;height:21px;background:#d6d9dd;"></div>
<div style="position:absolute;left:531px;top:335px;width:1px;height:21px;background:#d6d9dd;"></div>
<div style="position:absolute;left:631px;top:335px;width:1px;height:21px;background:#d6d9dd;"></div>
<div style="position:absolute;left:721px;top:335px;width:1px;height:21px;background:#d6d9dd;"></div>
<div style="position:absolute;left:821px;top:335px;width:1px;height:21px;background:#d6d9dd;"></div>
<div style="position:absolute;left:911px;top:335px;width:1px;height:21px;background:#d6d9dd;"></div>
<div style="position:absolute;left:1011px;top:335px;width:1px;height:21px;background:#d6d9dd;"></div>
<div style="position:absolute;left:1111px;top:335px;width:1px;height:21px;background:#d6d9dd;"></div>
<div style="position:absolute;left:1200px;top:335px;width:1px;height:21px;background:#d6d9dd;"></div>
<div style="position:absolute;left:16px;top:340.00px;font-size:12px;line-height:12px;color:#333;font-weight:normal;white-space:nowrap;transform:scaleX(1.07);transform-origin:left top;">12/02/24 14:16:25</div>
<div style="position:absolute;left:146px;top:340.00px;font-size:12px;line-height:12px;color:#333;font-weight:normal;white-space:nowrap;transform:scaleX(1.0);transform-origin:left top;">EMISSÃO DA NF Nº 10000086 #1 (Hidraucruz)</div>
<div style="position:absolute;right:735px;top:340.00px;font-size:12px;line-height:12px;color:#333;font-weight:normal;white-space:nowrap;transform:scaleX(1.02);transform-origin:right top;">1,00000</div>
<div style="position:absolute;right:645px;top:340.00px;font-size:12px;line-height:12px;color:#333;font-weight:normal;white-space:nowrap;transform:scaleX(1.02);transform-origin:right top;">6.523,10</div>
<div style="position:absolute;right:355px;top:340.00px;font-size:12px;line-height:12px;color:#333;font-weight:normal;white-space:nowrap;transform:scaleX(1.02);transform-origin:right top;">21,00000</div>
<div style="position:absolute;right:255px;top:340.00px;font-size:12px;line-height:12px;color:#333;font-weight:normal;white-space:nowrap;transform:scaleX(1.02);transform-origin:right top;">314,15857</div>
<div style="position:absolute;right:166px;top:340.00px;font-size:12px;line-height:12px;color:#333;font-weight:normal;white-space:nowrap;transform:scaleX(1.02);transform-origin:right top;">6.597,33</div>
<div style="position:absolute;left:8px;top:356px;width:1192px;height:22px;background:#f2b616;"></div>
<div style="position:absolute;left:139px;top:356px;width:392px;height:22px;background:#d4d7db;"></div>
<div style="position:absolute;left:138px;top:356px;width:1px;height:22px;background:#e0c27a;"></div>
<div style="position:absolute;left:531px;top:356px;width:1px;height:22px;background:#e0c27a;"></div>
<div style="position:absolute;left:631px;top:356px;width:1px;height:22px;background:#e0c27a;"></div>
<div style="position:absolute;left:721px;top:356px;width:1px;height:22px;background:#e0c27a;"></div>
<div style="position:absolute;left:821px;top:356px;width:1px;height:22px;background:#e0c27a;"></div>
<div style="position:absolute;left:911px;top:356px;width:1px;height:22px;background:#e0c27a;"></div>
<div style="position:absolute;left:1011px;top:356px;width:1px;height:22px;background:#e0c27a;"></div>
<div style="position:absolute;left:1111px;top:356px;width:1px;height:22px;background:#e0c27a;"></div>
<div style="position:absolute;left:1200px;top:356px;width:1px;height:22px;background:#e0c27a;"></div>
<div style="position:absolute;left:16px;top:361.00px;font-size:12px;line-height:12px;color:#111;font-weight:normal;white-space:nowrap;transform:scaleX(1.07);transform-origin:left top;">12/02/24 14:20:30</div>
<div style="position:absolute;left:146px;top:361.00px;font-size:12px;line-height:12px;color:#111;font-weight:normal;white-space:nowrap;transform:scaleX(0.98);transform-origin:left top;">RECEBIMENTO DA NF Nº 14562 #1 (Hidraucruz)</div>
<div style="position:absolute;right:545px;top:361.00px;font-size:12px;line-height:12px;color:#111;font-weight:normal;white-space:nowrap;transform:scaleX(1.02);transform-origin:right top;">1,00000</div>
<div style="position:absolute;right:455px;top:361.00px;font-size:12px;line-height:12px;color:#111;font-weight:normal;white-space:nowrap;transform:scaleX(1.02);transform-origin:right top;">6.523,10</div>
<div style="position:absolute;right:355px;top:361.00px;font-size:12px;line-height:12px;color:#111;font-weight:normal;white-space:nowrap;transform:scaleX(1.02);transform-origin:right top;">20,00000</div>
<div style="position:absolute;right:255px;top:361.00px;font-size:12px;line-height:12px;color:#111;font-weight:normal;white-space:nowrap;transform:scaleX(1.02);transform-origin:right top;">3,71150</div>
<div style="position:absolute;right:166px;top:361.00px;font-size:12px;line-height:12px;color:#111;font-weight:normal;white-space:nowrap;transform:scaleX(1.02);transform-origin:right top;">74,23</div>
<div style="position:absolute;left:1337px;top:229px;width:17px;height:377px;background:#f0f0f0;"></div>
<svg style="position:absolute;left:1342px;top:236px" width="8" height="4"><polygon points="0,4 8,4 4.0,0" fill="#a3a3a3"/></svg>
<svg style="position:absolute;left:1342px;top:595px" width="8" height="4"><polygon points="0,0 8,0 4.0,4" fill="#a3a3a3"/></svg>
<div style="position:absolute;left:8px;top:606px;width:1346px;height:23px;background:#eff0f2;border-top:1px solid #a3aab2;box-sizing:border-box;"></div>
<div style="position:absolute;left:8px;top:607px;width:1192px;height:22px;background:#c0c0c0;"></div>
<div style="position:absolute;left:138px;top:607px;width:1px;height:22px;background:#e6e6e6;"></div>
<div style="position:absolute;left:531px;top:607px;width:1px;height:22px;background:#e6e6e6;"></div>
<div style="position:absolute;left:631px;top:607px;width:1px;height:22px;background:#e6e6e6;"></div>
<div style="position:absolute;left:721px;top:607px;width:1px;height:22px;background:#e6e6e6;"></div>
<div style="position:absolute;left:821px;top:607px;width:1px;height:22px;background:#e6e6e6;"></div>
<div style="position:absolute;left:911px;top:607px;width:1px;height:22px;background:#e6e6e6;"></div>
<div style="position:absolute;left:1011px;top:607px;width:1px;height:22px;background:#e6e6e6;"></div>
<div style="position:absolute;left:1111px;top:607px;width:1px;height:22px;background:#e6e6e6;"></div>
<div style="position:absolute;left:1200px;top:607px;width:1px;height:22px;background:#e6e6e6;"></div>
<div style="position:absolute;left:1337px;top:607px;width:1px;height:22px;background:#a3aab2;"></div>
<div style="position:absolute;right:735px;top:611.00px;font-size:12px;line-height:12px;color:#333;font-weight:normal;white-space:nowrap;transform:scaleX(1.03);transform-origin:right top;">26,00000</div>
<div style="position:absolute;right:645px;top:611.00px;font-size:12px;line-height:12px;color:#333;font-weight:normal;white-space:nowrap;transform:scaleX(1.03);transform-origin:right top;">6.603,93</div>
<div style="position:absolute;right:545px;top:611.00px;font-size:12px;line-height:12px;color:#333;font-weight:normal;white-space:nowrap;transform:scaleX(1.03);transform-origin:right top;">6,00000</div>
<div style="position:absolute;right:455px;top:611.00px;font-size:12px;line-height:12px;color:#333;font-weight:normal;white-space:nowrap;transform:scaleX(1.03);transform-origin:right top;">6.529,70</div>
</body></html>
